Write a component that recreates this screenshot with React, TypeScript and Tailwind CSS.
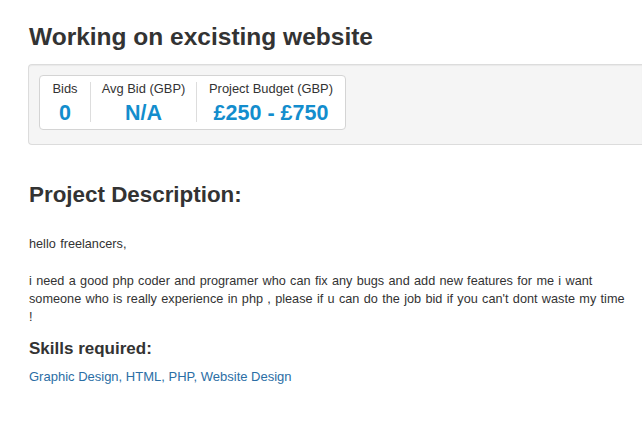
const stats = [
  { label: "Bids", value: "0", width: "w-[50px]" },
  { label: "Avg Bid (GBP)", value: "N/A", width: "w-[106px]" },
  { label: "Project Budget (GBP)", value: "£250 - £750", width: "w-[149px]" },
];

const skills = ["Graphic Design", "HTML", "PHP", "Website Design"];

export default function App() {
  return (
    <div className="min-h-[433px] bg-white pl-[29px] pt-[21px] font-['Liberation_Sans',Arial,sans-serif] text-[#333]">
      <h1 className="text-[24.5px] font-bold leading-[32px] text-[#333]">Working on excisting website</h1>

      <div className="ml-[-1px] mt-[11px] rounded-l-[4px] border border-r-0 border-[#dcdcdc] bg-[#f5f5f5] pb-[14px] pl-[10px] pt-[10px] shadow-[inset_0_1px_1px_rgba(0,0,0,0.05)]">
        <div className="inline-flex h-[55px] rounded-[4px] border border-[#d4d4d4] bg-white">
          {stats.map((s, i) => (
            <div key={s.label} className={`${s.width} flex`}>
              {i > 0 && <div className="mt-[6px] h-[40px] w-px bg-[#dddddd]" />}
              <div className="flex flex-1 flex-col items-center pt-[5px]">
                <span className="text-[12.9px] leading-[16px] text-[#333]">{s.label}</span>
                <span className="text-[21.5px] font-bold leading-[32px] text-[#138dcd]">{s.value}</span>
              </div>
            </div>
          ))}
        </div>
      </div>

      <h2 className="mt-[36px] text-[22.4px] font-bold leading-[28px] text-[#333]">Project Description:</h2>

      <div className="mt-[26px] w-[599px] text-[12.7px] leading-[18px] text-[#333] [word-spacing:0.8px]">
        <p>hello freelancers,</p>
        <p className="mt-[19px]">
          i need a good php coder and programer who can fix any bugs and add new features for me i want someone who is really experience in php , please if u can do the job bid if you can't dont waste my time !
        </p>
      </div>

      <h3 className="mt-[12px] text-[17px] font-bold leading-[22px] text-[#333]">Skills required:</h3>

      <div className="mt-[8px] text-[13px] leading-[18px] text-[#2b6ea5]">
        {skills.map((s, i) => (
          <span key={s}>
            <a href="#" className="text-[#2b6ea5]">{s}</a>
            {i < skills.length - 1 && ", "}
          </span>
        ))}
      </div>
    </div>
  );
}
